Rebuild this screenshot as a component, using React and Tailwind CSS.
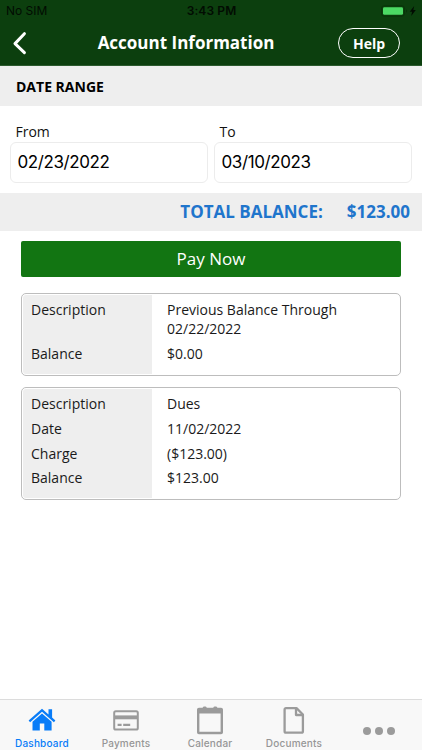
const cards = [
    [
        { label: "Description", value: "Previous Balance Through 02/22/2022" },
        { label: "Balance", value: "$0.00" },
    ],
    [
        { label: "Description", value: "Dues" },
        { label: "Date", value: "11/02/2022" },
        { label: "Charge", value: "($123.00)" },
        { label: "Balance", value: "$123.00" },
    ],
];

function StatusBar() {
    return (
        <div className="h-[22px] grid grid-cols-[1fr_auto_1fr] items-center pl-[6px] pr-[5px] font-['Inter',sans-serif] text-[12px] leading-none text-[#020c02]">
            <span>No SIM</span>
            <span className="font-semibold tracking-[0.1px]">3:43 PM</span>
            <svg className="justify-self-end" width="36" height="12" viewBox="0 0 36 12">
                <rect x="0.5" y="0.8" width="23" height="10.4" rx="2.6" fill="none" stroke="#093409" />
                <rect x="2" y="2.2" width="20" height="7.6" rx="1.4" fill="#4cd964" />
                <path d="M25 4.2v3.6c1.5-.6 1.5-3 0-3.6z" fill="#093409" />
                <path d="M33.2 1L28.7 6.8h2.4L30.2 11l4.6-6h-2.5z" fill="#020c02" />
            </svg>
        </div>
    );
}

function DateField({ label, value }) {
    return (
        <label className="w-[198px] block">
            <span className="block pl-[5.5px] h-[21px] text-[14px] leading-[21px] text-[#111]">{label}</span>
            <span className="flex items-center h-[41px] pl-[6.5px] rounded-[6px] border border-[#ececec] font-['Inter',sans-serif] text-[17px] tracking-[-0.4px] text-black">
                {value}
            </span>
        </label>
    );
}

function DetailCard({ rows }) {
    return (
        <div className="rounded-[5px] border border-[#bdbdbd] p-px">
            <div className="bg-[linear-gradient(to_right,#eeeeee_129px,#ffffff_129px)] rounded-l-[3px] pt-[2.5px] pb-[8px]">
                {rows.map((row) => (
                    <div key={row.label} className="flex pl-[8px] pt-[2.5px] pb-[3px] text-[14px] leading-[19.2px] text-[#1a1a1a]">
                        <div className="w-[136px] shrink-0">{row.label}</div>
                        <div className="w-[195px]">{row.value}</div>
                    </div>
                ))}
            </div>
        </div>
    );
}

function HouseIcon() {
    return (
        <svg width="28" height="24" viewBox="0 0 28 24" fill="#087cf8">
            <path d="M14 0.7L0.6 12.6l1.5 1.7L14 3.8l11.9 10.5 1.5-1.7-3.3-3V1.3h-3.6v5.1z" />
            <path d="M14 5.4L4.5 13.8v8.8h7.3v-7.1h4.5v7.1h7.3v-8.8z" />
        </svg>
    );
}

function CardIcon() {
    return (
        <svg width="26" height="21" viewBox="0 0 26 21">
            <rect x="1.2" y="1.2" width="23.6" height="18.4" rx="1.6" fill="none" stroke="#9b9b9b" strokeWidth="2" />
            <path d="M1 5.4h24v3.9H1z" fill="#9b9b9b" />
            <path d="M4.6 14.9h4M10.2 14.9h7" stroke="#9b9b9b" strokeWidth="2.1" />
        </svg>
    );
}

function CalendarIcon() {
    return (
        <svg width="28" height="29" viewBox="0 0 28 29" fill="#9b9b9b">
            <path fillRule="evenodd" d="M3 1.8h3.7c0-1.8 4-1.8 4 0h6.6c0-1.8 4-1.8 4 0H25c1.2 0 2 .8 2 2v22.4c0 1.2-.8 2-2 2H3c-1.2 0-2-.8-2-2V3.8c0-1.2.8-2 2-2zM3.4 7.6v18.1h21.2V7.6z" />
        </svg>
    );
}

function DocumentIcon() {
    return (
        <svg width="22" height="29" viewBox="0 0 22 29" fill="none" stroke="#9b9b9b" strokeWidth="2.3" strokeLinejoin="round">
            <path d="M3 2.1h10.5l6.4 6.4v16.7c0 .9-.5 1.5-1.4 1.5H3c-.8 0-1.4-.6-1.4-1.5V3.6c0-.9.6-1.5 1.4-1.5z" />
            <path d="M13 2.4V9h6.6" />
        </svg>
    );
}

function MoreIcon() {
    return (
        <svg width="34" height="10" viewBox="0 0 34 10" fill="#9b9b9b">
            <circle cx="5" cy="5" r="4" />
            <circle cx="17" cy="5" r="4" />
            <circle cx="29" cy="5" r="4" />
        </svg>
    );
}

const tabs = [
    { label: "Dashboard", icon: <HouseIcon />, active: true },
    { label: "Payments", icon: <CardIcon /> },
    { label: "Calendar", icon: <CalendarIcon /> },
    { label: "Documents", icon: <DocumentIcon /> },
];

export default function App() {
    return (
        <div className="h-[750px] w-[422px] flex flex-col overflow-hidden bg-white font-['Open_Sans','Noto_Sans',sans-serif]">
            <header className="h-[66px] shrink-0 bg-[#0c3f0e] border-b border-[#2c5a2e]">
                <StatusBar />
                <div className="h-[42px] grid grid-cols-[63px_1fr_63px] items-center px-[22px] text-white">
                    <svg className="-ml-[10px]" width="16" height="24" viewBox="0 0 16 24" fill="none" stroke="currentColor" strokeWidth="3" strokeLinecap="round" strokeLinejoin="round">
                        <path d="M12.4 2.7L3 12.6l9.4 9.1" />
                    </svg>
                    <h1 className="justify-self-center pr-[51px] -mr-[1px] ml-0 text-[17px] font-bold whitespace-nowrap">Account Information</h1>
                    <button className="justify-self-end w-[62px] h-[30px] rounded-full border border-white text-[14px] font-bold">Help</button>
                </div>
            </header>

            <h2 className="h-[40px] shrink-0 bg-[#eeeeee] flex items-center pl-[16px] text-[14px] font-bold text-black">DATE RANGE</h2>

            <div className="h-[87px] shrink-0 flex gap-[6px] pt-[15px] pl-[10px]">
                <DateField label="From" value="02/23/2022" />
                <DateField label="To" value="03/10/2023" />
            </div>

            <div className="h-[38px] shrink-0 bg-[#eeeeee] flex items-center justify-end gap-[24px] pr-[12px] text-[17px] font-bold text-[#1f75cc]">
                <span>TOTAL BALANCE:</span>
                <span>$123.00</span>
            </div>

            <main className="flex-1 pt-[10px] px-[21px]">
                <button className="w-full h-[36px] rounded-[2px] bg-[#127512] text-[17px] text-white">Pay Now</button>
                <div className="mt-[16px] flex flex-col gap-[11px]">
                    {cards.map((rows, i) => (
                        <DetailCard key={i} rows={rows} />
                    ))}
                </div>
            </main>

            <nav className="h-[51px] shrink-0 flex border-t border-[#dcdcdc] bg-[#f8f8f8] font-['Inter',sans-serif] text-[10px] font-medium">
                {tabs.map((tab) => (
                    <div key={tab.label} className={`w-[84px] flex flex-col items-center ${tab.active ? "text-[#087cf8]" : "text-[#969696]"}`}>
                        <div className="h-[37px] pt-[3px] flex items-center">{tab.icon}</div>
                        <span className="leading-[12px] tracking-[0.2px]">{tab.label}</span>
                    </div>
                ))}
                <div className="flex-1 flex justify-center pt-[26px]">
                    <MoreIcon />
                </div>
            </nav>
        </div>
    );
}
